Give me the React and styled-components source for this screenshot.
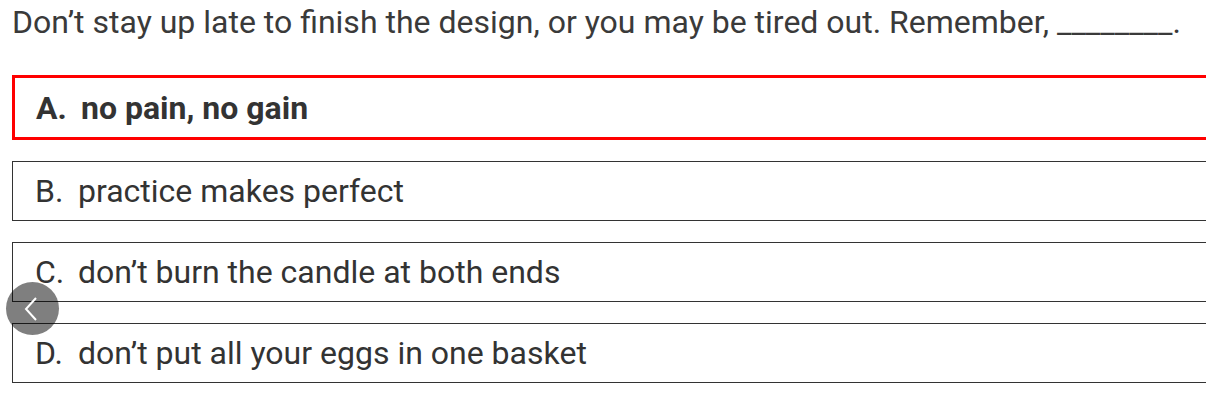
import React from 'react';
import styled, { createGlobalStyle } from 'styled-components';

const GlobalStyle = createGlobalStyle`
  html, body {
    margin: 0;
    padding: 0;
    background: #fff;
    overflow: hidden;
  }
  body {
    font-family: Roboto, "Liberation Sans", Arial, sans-serif;
    color: #333;
  }
`;

const Page = styled.div`
  position: relative;
  width: 1220px;
  padding: 2px 0 0 12px;
`;

const Question = styled.div`
  font-size: 32px;
  line-height: 40px;
  color: #3a3a3a;
  margin-bottom: 33px;
  white-space: nowrap;
`;

const Options = styled.div`
  display: flex;
  flex-direction: column;
  gap: 21px;
`;

const Option = styled.div`
  display: flex;
  align-items: center;
  box-sizing: border-box;
  height: ${props => (props.selected ? 65 : 60)}px;
  border: ${props => (props.selected ? '3px solid #f00' : '1px solid #333')};
  padding-left: ${props => (props.selected ? 21 : 22)}px;
  font-size: 32px;
  font-weight: ${props => (props.selected ? 700 : 400)};
  color: #333;
  white-space: nowrap;
`;

const Letter = styled.span`
  display: inline-block;
  width: ${props => (props.selected ? 45 : 43)}px;
`;

const BackButton = styled.div`
  position: absolute;
  left: 6px;
  top: 282px;
  width: 53px;
  height: 53px;
  border-radius: 50%;
  background: rgba(0, 0, 0, 0.5);
  display: flex;
  align-items: center;
  justify-content: center;
`;

const options = [
  { key: 'A', text: 'no pain, no gain', selected: true },
  { key: 'B', text: 'practice makes perfect' },
  { key: 'C', text: 'don’t burn the candle at both ends' },
  { key: 'D', text: 'don’t put all your eggs in one basket' },
];

export default function App() {
  return (
    <Page>
      <GlobalStyle />
      <Question>
        Don’t stay up late to finish the design, or you may be tired out. Remember, ________.
      </Question>
      <Options>
        {options.map(o => (
          <Option key={o.key} selected={o.selected}>
            <Letter selected={o.selected}>{o.key}.</Letter>
            {o.text}
          </Option>
        ))}
      </Options>
      <BackButton>
        <svg width="14" height="24" viewBox="0 0 14 24" style={{ marginLeft: -4 }}>
          <path d="M12 1 L2 12 L12 23" fill="none" stroke="#fff" strokeWidth="2" />
        </svg>
      </BackButton>
    </Page>
  );
}
